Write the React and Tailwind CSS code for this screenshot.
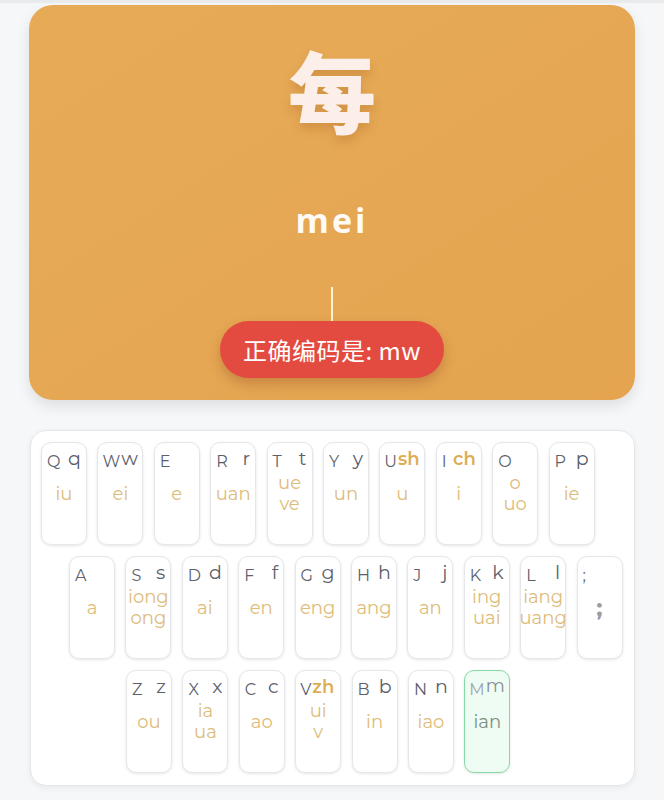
import React from "react";

const rows = [
  {
    pl: "pl-[10px]",
    keys: [
      { u: "Q", l: "q", y: ["iu"] },
      { u: "W", l: "w", y: ["ei"], tight: true },
      { u: "E", l: "", y: ["e"] },
      { u: "R", l: "r", y: ["uan"] },
      { u: "T", l: "t", y: ["ue", "ve"] },
      { u: "Y", l: "y", y: ["un"] },
      { u: "U", l: "sh", y: ["u"], hl: true, tight: true },
      { u: "I", l: "ch", y: ["i"], hl: true },
      { u: "O", l: "", y: ["o", "uo"] },
      { u: "P", l: "p", y: ["ie"] },
    ],
  },
  {
    pl: "pl-[38px]",
    keys: [
      { u: "A", l: "", y: ["a"] },
      { u: "S", l: "s", y: ["iong", "ong"] },
      { u: "D", l: "d", y: ["ai"] },
      { u: "F", l: "f", y: ["en"] },
      { u: "G", l: "g", y: ["eng"] },
      { u: "H", l: "h", y: ["ang"] },
      { u: "J", l: "j", y: ["an"] },
      { u: "K", l: "k", y: ["ing", "uai"] },
      { u: "L", l: "l", y: ["iang", "uang"] },
      { u: ";", l: "", y: [";"], semi: true },
    ],
  },
  {
    pl: "pl-[95px]",
    keys: [
      { u: "Z", l: "z", y: ["ou"] },
      { u: "X", l: "x", y: ["ia", "ua"] },
      { u: "C", l: "c", y: ["ao"] },
      { u: "V", l: "zh", y: ["ui", "v"], hl: true, tight: true },
      { u: "B", l: "b", y: ["in"] },
      { u: "N", l: "n", y: ["iao"] },
      { u: "M", l: "m", y: ["ian"], active: true, tight: true },
    ],
  },
];

function Key({ k }) {
  const base = k.active
    ? "border-[#86d9a6] bg-[#effcf3]"
    : "border-[#e6e7ea] bg-white";
  return (
    <div
      className={`relative w-[46px] h-[103px] rounded-[10px] border ${base} shadow-[0_1px_3px_rgba(0,0,0,0.10)] flex flex-col`}
    >
      <div
        className={`flex items-start ${
          k.tight ? "justify-start gap-[1px] pl-[4px]" : "justify-between px-[5px]"
        } pt-[6px] h-[28px]`}
      >
        <span
          className={`text-[16px] leading-none mt-[5px] ${
            k.active ? "text-[#9ca3af]" : "text-[#5b606b]"
          } ${k.semi ? "text-[13px] mt-[3px]" : ""}`}
        >
          {k.u}
        </span>
        {k.l ? (
          <span
            className={`leading-none ${
              k.hl
                ? "text-[18px] font-semibold text-[#dcae55] mt-[1px]"
                : k.active
                ? "text-[18px] text-[#8a8f97]"
                : "text-[19px] text-[#5b606b]"
            }`}
          >
            {k.l}
          </span>
        ) : null}
      </div>
      <div className="flex flex-col items-center justify-center h-[50px] -mt-[2px]">
        {k.semi ? (
          <span className="text-[24px] font-bold text-[#9a9ca0] leading-none">;</span>
        ) : (
          k.y.map((t, i) => (
            <span
              key={i}
              className={`text-[18px] leading-[21px] ${
                k.active ? "text-[#7a9082]" : "text-[#ddbc7a]"
              }`}
            >
              {t}
            </span>
          ))
        )}
      </div>
    </div>
  );
}

export default function App() {
  return (
    <div
      className="w-[664px] h-[800px] bg-[#f6f7f9] border-t-[3px] border-[#e9eaec] overflow-hidden"
      style={{ fontFamily: '"Montserrat", "Open Sans", "Noto Sans CJK SC", sans-serif' }}
    >
      <div className="pt-[2px] px-[29px]">
        <div className="relative h-[395px] rounded-[24px] bg-gradient-to-br from-[#e7ab58] to-[#e4a450] shadow-[0_6px_14px_rgba(0,0,0,0.10)] flex flex-col items-center">
          <div
            className="mt-[31px] text-[88px] leading-[104px] font-black text-[#fcefe9] [text-shadow:0_6px_10px_rgba(150,80,20,0.25)]"
            style={{ fontFamily: '"Noto Sans CJK SC", sans-serif' }}
          >
            每
          </div>
          <div
            className="mt-[60px] text-[34px] leading-[40px] font-bold tracking-[3px] text-[#fffaf5]"
            style={{ fontFamily: '"Open Sans", sans-serif' }}
          >
            mei
          </div>
          <div className="mt-[47px] w-[2px] h-[34px] bg-[#fff4cf]" />
          <div
            className="h-[57px] px-[23px] rounded-full bg-[#e34b41] shadow-[0_6px_12px_rgba(120,40,20,0.25)] flex items-center text-white text-[24px] tracking-[0.5px]"
            style={{ fontFamily: '"Noto Sans CJK SC", sans-serif' }}
          >
            正确编码是: mw
          </div>
        </div>
      </div>
      <div className="mt-[30px] mx-[30px] w-[605px] h-[356px] rounded-[16px] bg-white border border-[#e5e6e9] shadow-[0_2px_6px_rgba(0,0,0,0.06)] pt-[11px] flex flex-col gap-[11px]">
        {rows.map((r, i) => (
          <div key={i} className={`flex gap-[10.4px] ${r.pl}`}>
            {r.keys.map((k, j) => (
              <Key key={j} k={k} />
            ))}
          </div>
        ))}
      </div>
    </div>
  );
}
